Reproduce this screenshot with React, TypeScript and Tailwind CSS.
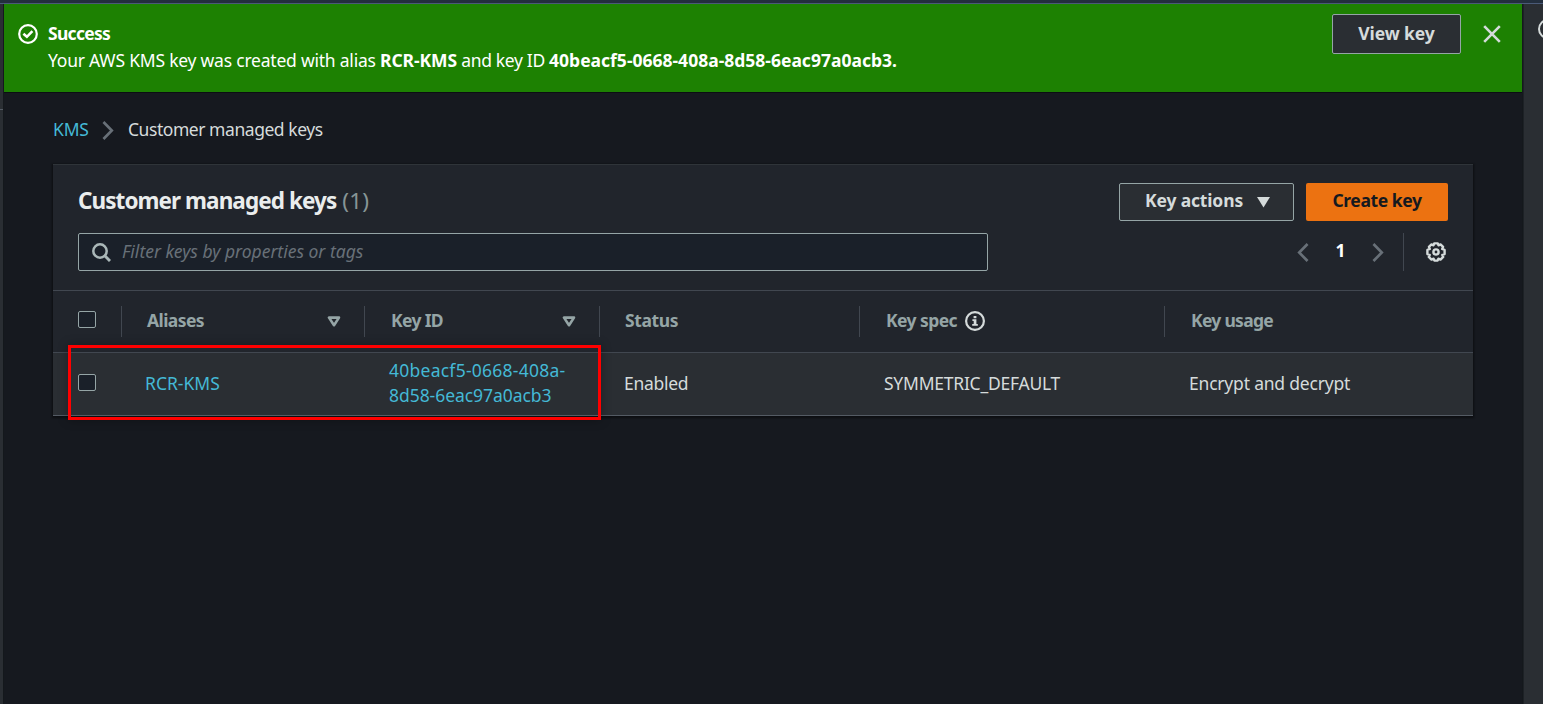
import React from "react";

const LINK = "text-[#44b9d6]";

function Checkbox() {
  return (
    <span
      role="checkbox"
      aria-checked="false"
      className="block h-[17px] w-[18px] rounded-[2px] border border-[#95a5a6] bg-[#1a2029]"
    />
  );
}

function SuccessIcon() {
  return (
    <svg className="size-5" viewBox="0 0 20 20" fill="none" stroke="#fff" strokeWidth="2.2">
      <circle cx="10" cy="10" r="8.8" />
      <path d="M5.4 9.8 8.9 12.8 14.4 7.2" strokeWidth="2.6" />
    </svg>
  );
}

function CloseIcon() {
  return (
    <svg className="size-[18px]" viewBox="0 0 18 18" fill="none" stroke="#d5dbdb" strokeWidth="2.6">
      <path d="M1.2 1.2 16.8 16.8M16.8 1.2 1.2 16.8" />
    </svg>
  );
}

function Chevron({ left = false, className }: { left?: boolean; className: string }) {
  return (
    <svg className={className} viewBox="0 0 12 20" fill="none" stroke="#687078" strokeWidth="2.8">
      <path d={left ? "M10.8 1 2 10 10.8 19" : "M1.2 1 10 10 1.2 19"} />
    </svg>
  );
}

function SearchIcon() {
  return (
    <svg className="size-[19px] shrink-0" viewBox="0 0 19 19" fill="none" stroke="#aab7b8" strokeWidth="2.5">
      <circle cx="8" cy="8" r="6.7" />
      <path d="M12.8 12.8 18 18" strokeWidth="2.9" />
    </svg>
  );
}

function GearIcon() {
  return (
    <svg className="size-5" viewBox="0 0 20 20" fill="none" stroke="#d5dbdb" strokeWidth="2.4" strokeLinejoin="round">
      <path d="M8.2 1.4h3.6l.7 1.9 2-.9 2.6 2.5-.9 2.1 2.4.9v4.2l-2.3.8.9 2-2.7 2.7-2.1-.9-.8 1.9H8.4l-.8-1.9-2.1.9-2.7-2.7.9-2-2.3-.8V7.9l2.4-.9-.9-2.1 2.6-2.5 2 .9z" />
      <circle cx="10" cy="10" r="2.6" />
    </svg>
  );
}

function InfoIcon() {
  return (
    <svg className="size-5" viewBox="0 0 20 20" fill="none" stroke="#d5dbdb">
      <circle cx="10" cy="10" r="8.9" strokeWidth="2.2" />
      <path d="M8.6 5h2.8v2.2H8.6zM7.4 8.3h4v4.8h1.4v1.7H7.2v-1.7h1.5V10H7.4z" fill="#d5dbdb" stroke="none" />
    </svg>
  );
}

function SortIcon() {
  return (
    <svg className="h-[11px] w-[14px]" viewBox="0 0 14 11" fill="none" stroke="#95a5a6" strokeWidth="2.6" strokeLinejoin="round">
      <path d="M2 1.6h10L7 9.2z" />
    </svg>
  );
}

function Divider({ className = "h-[31px]" }: { className?: string }) {
  return <span className={`w-px shrink-0 bg-[#414750] ${className}`} />;
}

export default function App() {
  return (
    <div className="flex h-[704px] w-full flex-col overflow-hidden bg-[#16191f] font-['Noto_Sans',sans-serif] text-[17.5px] leading-[25px] text-[#d5dbdb]">
      <div className="h-1 shrink-0 border-b border-[#4a5a78] bg-[#232f3e]" />
      <div className="flex min-h-0 flex-1">
        <aside className="w-[3px] shrink-0 bg-[#2a2e33] pt-[105px]">
          <div className="h-px bg-[#545b64]" />
        </aside>

        <main className="flex min-w-0 flex-1 flex-col border-r border-l border-[#14181c]">
          <section className="flex h-[89px] shrink-0 border-b border-[#0b0e12] bg-[#1d8102] text-white">
            <div className="pt-5 pl-[14px]">
              <SuccessIcon />
            </div>
            <div className="flex-1 pt-4 pl-[10px] leading-[27px]">
              <div className="font-bold tracking-[-0.71px]">Success</div>
              <div className="whitespace-nowrap">
                <span className="tracking-[-0.22px]">Your AWS KMS key was created with alias </span>
                <b className="tracking-[-0.08px]">RCR-KMS</b>
                <span className="tracking-[-0.34px]"> and key ID </span>
                <b>40beacf5-0668-408a-8d58-6eac97a0acb3.</b>
              </div>
            </div>
            <button className="mt-[10px] h-10 w-[129px] rounded-[2px] border border-[#95a5a6] bg-[#2a2e33] pb-px font-bold tracking-[-0.1px] text-[#d5dbdb]">
              View key
            </button>
            <div className="pt-[21px] pr-[21px] pl-[22px]">
              <CloseIcon />
            </div>
          </section>

          <nav className="mt-6 flex h-[25px] items-center pl-[49px]">
            <a className={`w-[36px] tracking-[-0.2px] ${LINK}`}>KMS</a>
            <Chevron className="mt-[2px] ml-[13px] h-[19px] w-3" />
            <span className="ml-[14px] tracking-[-0.45px] whitespace-nowrap">Customer managed keys</span>
          </nav>

          <section className="mt-[22px] mr-[49px] ml-[49px] border-t border-[#2f3439] bg-[#21252c] shadow-[0_1px_2px_1px_rgba(0,0,0,0.45)]">
            <header className="h-[126px] border-b border-[#414750] px-[25px] pt-[18px]">
              <div className="flex h-[38px] items-center">
                <h1 className="flex-1 pb-[3px] text-[22.5px] whitespace-nowrap">
                  <span className="font-bold tracking-[-0.93px] text-[#eaeded]">Customer managed keys</span>
                  <span className="pl-[6px] tracking-[0.2px] text-[#879596]">(1)</span>
                </h1>
                <button className="flex h-[38px] w-[175px] items-center justify-center gap-[14px] rounded-[2px] border border-[#95a5a6] bg-[#2a2e33] pl-[2px] font-bold">
                  <span className="pb-[3px] tracking-[-0.15px]">Key actions</span>
                  <svg className="h-[11px] w-[13px]" viewBox="0 0 13 11" fill="#d5dbdb">
                    <path d="M0 0h13L6.5 10.5z" />
                  </svg>
                </button>
                <button className="ml-3 h-[38px] w-[142px] rounded-[2px] bg-[#ec7211] pb-[3px] font-bold tracking-[-0.42px] text-[#16191f]">
                  Create key
                </button>
              </div>
              <div className="mt-3 flex h-[38px] items-center">
                <div className="flex h-[38px] w-[910px] items-center rounded-[2px] border border-[#95a5a6] bg-[#1a2029] pl-[13px]">
                  <SearchIcon />
                  <span className="pb-[2px] pl-[11px] text-[#687078] italic">Filter keys by properties or tags</span>
                </div>
                <div className="flex flex-1 items-center justify-end">
                  <Chevron left className="h-[19px] w-3" />
                  <span className="w-[63px] pb-[3px] text-center font-bold text-white">1</span>
                  <Chevron className="h-[19px] w-3" />
                  <Divider className="mr-[22px] ml-[19px] h-[38px]" />
                  <div className="pr-[2px]">
                    <GearIcon />
                  </div>
                </div>
              </div>
            </header>

            <div className="relative grid grid-cols-[68px_243px_235px_260px_305px_309px]">
              <div className="col-span-6 grid h-[62px] grid-cols-subgrid items-center border-b border-[#414750] font-bold text-[#95a5a6]">
                <div className="flex items-center pl-[25px]">
                  <div className="-mt-1">
                    <Checkbox />
                  </div>
                </div>
                <div className="flex items-center">
                  <Divider />
                  <span className="flex-1 pb-[3px] pl-[25px] tracking-[-0.58px]">Aliases</span>
                  <span className="mr-[23px]"><SortIcon /></span>
                </div>
                <div className="flex items-center">
                  <Divider />
                  <span className="flex-1 pb-[3px] pl-[26px] tracking-[-0.65px]">Key ID</span>
                  <span className="mr-[23px]"><SortIcon /></span>
                </div>
                <div className="flex items-center">
                  <Divider />
                  <span className="pb-[3px] pl-[25px] tracking-[-0.41px]">Status</span>
                </div>
                <div className="flex items-center">
                  <Divider />
                  <span className="pr-2 pb-[3px] pl-[26px] tracking-[-0.57px]">Key spec</span>
                  <span className="pb-px"><InfoIcon /></span>
                </div>
                <div className="flex items-center">
                  <Divider />
                  <span className="pb-[3px] pl-[26px] tracking-[-0.71px]">Key usage</span>
                </div>
              </div>

              <div className="col-span-6 grid h-[63px] grid-cols-subgrid items-center border-b border-[#545b64] bg-[#2a2e33]">
                <div className="pb-[3px] pl-[25px]">
                  <Checkbox />
                </div>
                <a className={`pb-[2px] pl-6 ${LINK}`}>RCR-KMS</a>
                <a className={`pb-[2px] pl-[25px] whitespace-nowrap ${LINK}`}>
                  <span className="block tracking-[0.25px]">40beacf5-0668-408a-</span>
                  <span className="block tracking-[-0.05px]">8d58-6eac97a0acb3</span>
                </a>
                <span className="pb-[2px] pl-[25px] tracking-[-0.28px]">Enabled</span>
                <span className="pb-[2px] pl-[25px] tracking-[-0.24px]">SYMMETRIC_DEFAULT</span>
                <span className="pb-[2px] pl-[25px] tracking-[-0.2px]">Encrypt and decrypt</span>
              </div>

              <div className="pointer-events-none absolute top-[54px] left-[15px] h-[75px] w-[533px] border-[3px] border-[#ff0000] shadow-[0_0_10px_rgba(0,0,0,0.3)]" />
            </div>
          </section>
        </main>

        <aside className="w-5 shrink-0 overflow-hidden border-l border-[#1d2126] bg-[#2a2e33] pt-[15px] pl-[14px]">
          <svg className="h-5 w-5 max-w-none" viewBox="0 0 20 20" fill="none" stroke="#d5dbdb" strokeWidth="2">
            <circle cx="10" cy="10" r="9" />
          </svg>
        </aside>
      </div>
    </div>
  );
}
